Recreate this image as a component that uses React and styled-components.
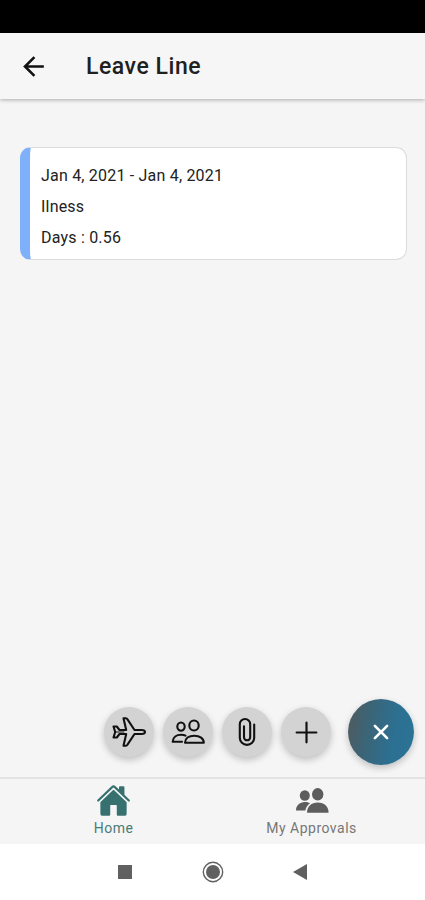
import styled, { createGlobalStyle } from "styled-components";
import { MdArrowBack } from "react-icons/md";
import { IoAddOutline, IoClose, IoHome } from "react-icons/io5";

const GlobalStyle = createGlobalStyle`
  * {
    box-sizing: border-box;
  }

  body {
    margin: 0;
    font-family: Roboto, "Liberation Sans", sans-serif;
    background: #f5f5f5;
  }

  button {
    border: none;
    padding: 0;
    font-family: inherit;
  }

  svg {
    display: block;
  }
`;

const Screen = styled.div`
  display: flex;
  flex-direction: column;
  height: 100vh;
`;

const StatusBar = styled.div`
  flex: none;
  height: 33px;
  background: #000;
`;

const Header = styled.header`
  flex: none;
  display: flex;
  align-items: center;
  gap: 37px;
  height: 66px;
  padding-left: 18px;
  background: #f6f6f6;
  box-shadow: 0 1px 4px rgba(0, 0, 0, 0.3);
`;

const BackButton = styled.button`
  background: none;
  color: #111;
  font-size: 31px;
`;

const Title = styled.h1`
  margin: 0;
  padding-top: 2px;
  color: #202020;
  font-size: 23px;
  font-weight: 500;
  line-height: 28px;
  letter-spacing: 0.55px;
`;

const Content = styled.main`
  flex: 1;
  display: flex;
  flex-direction: column;
  justify-content: space-between;
  padding: 48px 18px 12px 20px;
`;

const LeaveCard = styled.article`
  height: 113px;
  padding: 12px 12px 12px 11px;
  border: 1px solid #dcdcdc;
  border-left: 10px solid #7fb1fa;
  border-radius: 11px;
  background: #fff;

  p {
    margin: 0;
    color: #222;
    font-size: 16px;
    line-height: 31px;
    letter-spacing: 0.2px;
  }
`;

const FabList = styled.div`
  display: flex;
  align-items: center;
  justify-content: flex-end;
  gap: 9px;
  margin-right: -7px;
`;

const Fab = styled.button`
  display: flex;
  align-items: center;
  justify-content: center;
  width: 50px;
  height: 50px;
  border-radius: 50%;
  background: #d3d3d3;
  color: #111;
  font-size: 35px;
  box-shadow: 0 3px 7px rgba(0, 0, 0, 0.22);
`;

const MainFab = styled(Fab)`
  width: 66px;
  height: 66px;
  margin-left: 8px;
  background: linear-gradient(100deg, #4f5b60 5%, #3c6476 30%, #2c7092 68%, #2b7396 100%);
  color: #fff;
  font-size: 28px;
`;

const OutlineIcon = styled.svg`
  width: 36px;
  height: 36px;
  fill: none;
  stroke: currentColor;
  stroke-width: 2.1px;
  stroke-linecap: round;
  stroke-linejoin: round;
`;

const TabBar = styled.nav`
  flex: none;
  display: flex;
  justify-content: center;
  height: 67px;
  border-top: 2px solid #e2e2e2;
  background: #f5f5f5;
`;

const Tab = styled.a`
  display: flex;
  flex-direction: column;
  align-items: center;
  width: 198px;
  padding-top: 4px;
  color: ${({ $active }) => ($active ? "#37716f" : "#5d5d5d")};
  font-size: 35px;

  span {
    margin-top: 2px;
    color: ${({ $active }) => ($active ? "#4b7b75" : "#777")};
    font-size: 14px;
    line-height: 16px;
    letter-spacing: 0.5px;
  }
`;

const SystemBar = styled.div`
  flex: none;
  display: flex;
  align-items: center;
  justify-content: center;
  gap: 69px;
  height: 56px;
  background: #fff;
`;

const PlaneIcon = () => (
  <OutlineIcon viewBox="0 0 36 36">
    <path d="M34 18c0-1.300-1.500-2-3.500-2H23.500L16.500 5.400c-.4-.8-1-1.100-1.700-1.100H12.500L15.200 16H8.500L5.800 12.500H2.500L4.200 18 2.500 23.500H5.800L8.500 20H15.200L12.500 31.700H14.800c.7 0 1.300-.3 1.700-1.100L23.500 20H30.500c2 0 3.500-.7 3.500-2Z" />
    <path d="M5 18H13" strokeWidth="1" />
  </OutlineIcon>
);

const PeopleOutlineIcon = () => (
  <OutlineIcon viewBox="0 0 36 36">
    <ellipse cx="11" cy="12.600" rx="3.700" ry="4.100" />
    <ellipse cx="24" cy="11.500" rx="4.700" ry="5" />
    <path d="M15 28.800C15 24.500 18.800 21.700 24.300 21.700S33.800 24.500 33.800 28.800Z" />
    <path d="M15.500 21.600C14.300 21 12.800 20.800 11 20.800 6.500 20.800 3 23.400 2.700 27.700H12" />
  </OutlineIcon>
);

const ClipIcon = () => (
  <OutlineIcon viewBox="0 0 36 36">
    <path d="M25.200 10.500V23.700a7.200 7.200 0 0 1-14.400 0V10.200a5.200 5.200 0 0 1 10.400 0V23.200a3.100 3.100 0 0 1-6.200 0V12.200" />
  </OutlineIcon>
);

const PeopleIcon = () => (
  <svg width="35" height="35" viewBox="0 0 35 35" fill="currentColor">
    <ellipse cx="10.800" cy="12.500" rx="5" ry="5.300" />
    <ellipse cx="23.700" cy="11.300" rx="5.700" ry="6.200" />
    <path d="M13 29.800C13 23.600 17.400 19.600 23.800 19.600S34.600 23.600 34.600 29.800Z" />
    <path d="M2 27.600C2 22.500 5.500 19 10.800 19 12.800 19 14.600 19.400 16 20.200 13.500 21.900 11.800 24.400 11.300 27.600Z" />
  </svg>
);

const LEAVE = ["Jan 4, 2021 - Jan 4, 2021", "Ilness", "Days : 0.56"];

export default function App() {
  return (
    <>
      <GlobalStyle />
      <Screen>
        <StatusBar />
        <Header>
          <BackButton aria-label="Back">
            <MdArrowBack />
          </BackButton>
          <Title>Leave Line</Title>
        </Header>
        <Content>
          <LeaveCard>
            {LEAVE.map((line) => (
              <p key={line}>{line}</p>
            ))}
          </LeaveCard>
          <FabList>
            <Fab aria-label="Travel">
              <PlaneIcon />
            </Fab>
            <Fab aria-label="People">
              <PeopleOutlineIcon />
            </Fab>
            <Fab aria-label="Attach">
              <ClipIcon />
            </Fab>
            <Fab aria-label="Add">
              <IoAddOutline />
            </Fab>
            <MainFab aria-label="Close">
              <IoClose />
            </MainFab>
          </FabList>
        </Content>
        <TabBar>
          <Tab $active>
            <IoHome />
            <span>Home</span>
          </Tab>
          <Tab>
            <PeopleIcon />
            <span>My Approvals</span>
          </Tab>
        </TabBar>
        <SystemBar>
          <svg width="14" height="14" viewBox="0 0 14 14">
            <rect width="14" height="14" fill="#606060" />
          </svg>
          <svg width="23" height="22" viewBox="0 0 23 22">
            <circle cx="12" cy="11" r="9.7" fill="none" stroke="#606060" strokeWidth="1.4" />
            <circle cx="12" cy="11" r="7" fill="#606060" />
          </svg>
          <svg width="14" height="16" viewBox="0 0 14 16">
            <path d="M0 8 14 0v16z" fill="#606060" />
          </svg>
        </SystemBar>
      </Screen>
    </>
  );
}
